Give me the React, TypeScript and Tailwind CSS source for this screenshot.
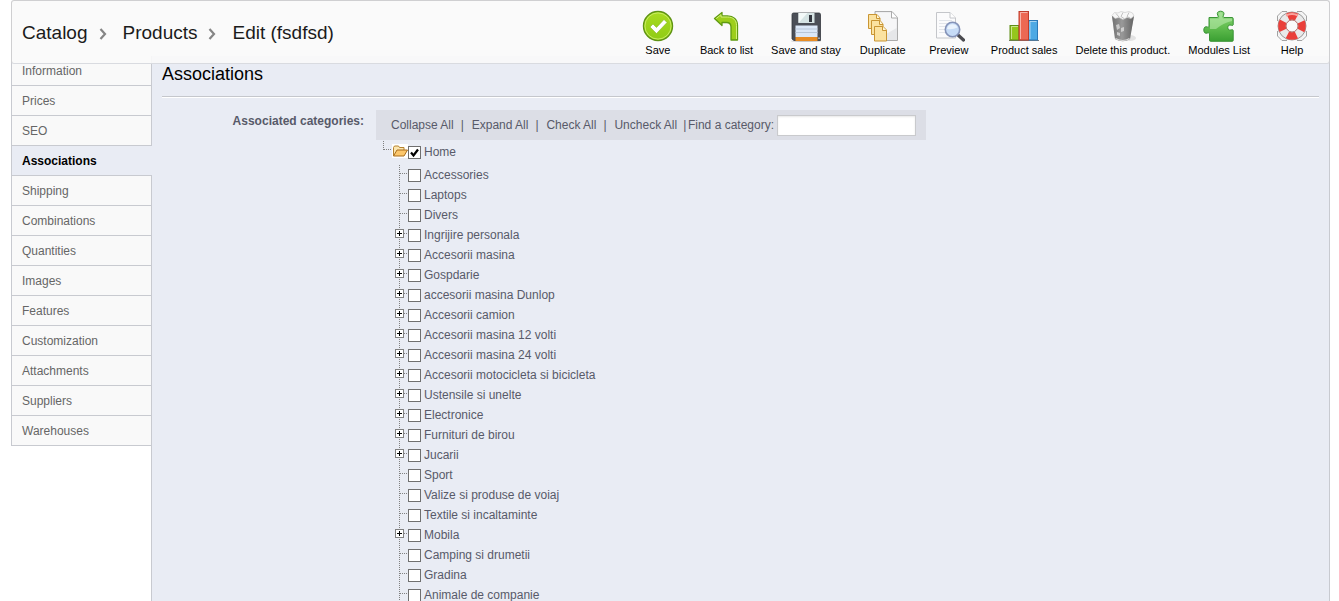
import { Fragment, useState, type ReactNode } from 'react';

interface Category {
  name: string;
  expandable?: boolean;
}

const MENU = [
  'Information',
  'Prices',
  'SEO',
  'Associations',
  'Shipping',
  'Combinations',
  'Quantities',
  'Images',
  'Features',
  'Customization',
  'Attachments',
  'Suppliers',
  'Warehouses',
];

const CATEGORIES: Category[] = [
  { name: 'Accessories' },
  { name: 'Laptops' },
  { name: 'Divers' },
  { name: 'Ingrijire personala', expandable: true },
  { name: 'Accesorii masina', expandable: true },
  { name: 'Gospdarie', expandable: true },
  { name: 'accesorii masina Dunlop', expandable: true },
  { name: 'Accesorii camion', expandable: true },
  { name: 'Accesorii masina 12 volti', expandable: true },
  { name: 'Accesorii masina 24 volti', expandable: true },
  { name: 'Accesorii motocicleta si bicicleta', expandable: true },
  { name: 'Ustensile si unelte', expandable: true },
  { name: 'Electronice', expandable: true },
  { name: 'Furnituri de birou', expandable: true },
  { name: 'Jucarii', expandable: true },
  { name: 'Sport' },
  { name: 'Valize si produse de voiaj' },
  { name: 'Textile si incaltaminte' },
  { name: 'Mobila', expandable: true },
  { name: 'Camping si drumetii' },
  { name: 'Gradina' },
  { name: 'Animale de companie' },
];

function SaveIcon() {
  return (
    <svg width="32" height="32" viewBox="0 0 32 32">
      <defs>
        <linearGradient id="save" x1="0" y1="0" x2="0" y2="1">
          <stop offset="0" stopColor="#a9dc22" />
          <stop offset="1" stopColor="#8fcb14" />
        </linearGradient>
      </defs>
      <circle cx="16" cy="16" r="14.5" fill="url(#save)" stroke="#5f9314" strokeWidth="1.4" />
      <circle cx="16" cy="16" r="13.1" fill="none" stroke="#c9ec63" strokeWidth="1" />
      <path d="M8 17l3-3 3.500 3.500 7.500-8 3 3-10.500 11z" fill="#fff" stroke="#7fae18" strokeWidth=".5" />
    </svg>
  );
}

function BackIcon() {
  return (
    <svg width="32" height="32" viewBox="0 0 32 32">
      <path
        d="M4.500 8.500L12 2.500v3.500h5.500c6 0 10 3.500 10 9.500v14.500h-6.500V17c0-3-1.500-4.500-4.500-4.500H12v3z"
        fill="#9dce1c"
        stroke="#5f9a12"
        strokeWidth="1.300"
        strokeLinejoin="round"
      />
      <path d="M6.200 8.500L11 4.700V7h6.500c5.500 0 9 3 9 8.500V29" fill="none" stroke="#d3f07a" strokeWidth="1" />
    </svg>
  );
}

function FloppyIcon() {
  return (
    <svg width="32" height="32" viewBox="0 0 32 32">
      <ellipse cx="16" cy="31" rx="15" ry="1" fill="#c9c9c9" />
      <path d="M2 4.500q0-1.500 1.500-1.500H29q1.500 0 1.500 1.500V30.500H4L2 29z" fill="#4b4f57" stroke="#34373d" strokeWidth=".8" />
      <rect x="8.500" y="3" width="16" height="10" fill="#d5e3e3" />
      <path d="M8.500 13V3h9z" fill="#f3f9f8" />
      <rect x="19" y="5" width="3" height="7" fill="#33373f" />
      <rect x="5.500" y="15.500" width="22" height="11.500" fill="#dbe8f8" />
      <path d="M5.500 19h22M5.500 22.500h22" stroke="#b8c6d8" />
      <rect x="5.500" y="27" width="22" height="4" fill="#e88d25" />
      <rect x="28.500" y="27.500" width="1" height="1.500" fill="#fff" />
    </svg>
  );
}

function DuplicateIcon() {
  return (
    <svg width="32" height="32" viewBox="0 0 32 32">
      <path d="M8 1.500h17l5.500 6V30.500H8z" fill="#e6e7e9" stroke="#ababab" />
      <path d="M9 2.500h15v5.500h5.500V18L9 30z" fill="#f6f6f7" />
      <path d="M24.500 2v6h6" fill="#fff" stroke="#ababab" />
      <g fill="#fbe2a0" stroke="#c99533">
        <path d="M1.500 4.500h8.500l3 3.500v10.500H1.500z" />
        <path d="M9.500 4.500v4H13" fill="#fff6d8" />
        <path d="M4.500 10.500H13l3 3.500v10.500H4.500z" />
        <path d="M12.500 10.500v4H16" fill="#fff6d8" />
        <path d="M7.500 16.500H16l3.500 3.500v11H7.500z" />
        <path d="M15.500 16.500v4h4" fill="#fff6d8" />
      </g>
    </svg>
  );
}

function PreviewIcon() {
  return (
    <svg width="32" height="32" viewBox="0 0 32 32">
      <path d="M3.500 2.500H17l5.500 5.500v20H3.500z" fill="#fbfbfc" stroke="#c4c6ca" />
      <path d="M17 2.500V8h5.500" fill="#fff" stroke="#c4c6ca" />
      <path d="M6 10.500h13M6 13.500h8M6 16.500h6M6 19.500h6M6 22.500h7" stroke="#e2e5ea" />
      <path d="M25 25l5.500 5" stroke="#4b4b4f" strokeWidth="3.200" strokeLinecap="round" />
      <circle cx="19.500" cy="19.500" r="7.200" fill="#c6dbf6" stroke="#8593b8" strokeWidth="1.600" />
      <path d="M14 19a5.500 5.500 0 0 1 10.500-1.500q-5 2.500-10.500 1.500z" fill="#eaf3fd" />
    </svg>
  );
}

function SalesIcon() {
  return (
    <svg width="32" height="32" viewBox="0 0 32 32">
      <path d="M1 30.500h30" stroke="#777" />
      <rect x="2" y="15.500" width="9" height="14.500" fill="#95c71c" stroke="#5f8d17" />
      <rect x="20.500" y="10.500" width="9" height="19.500" fill="#4da9e4" stroke="#2a78b8" />
      <rect x="11" y="1.500" width="9.500" height="28.500" fill="#ec6853" stroke="#bf3c2b" />
      <path d="M3.500 29V16.500h6.500M12.500 29V2.500h7M22 29V11.500h6.500" fill="none" stroke="#fff" strokeOpacity=".5" />
    </svg>
  );
}

function TrashIcon() {
  return (
    <svg width="32" height="32" viewBox="0 0 32 32">
      <defs>
        <linearGradient id="bin" x1="0" x2="1">
          <stop offset="0" stopColor="#858585" />
          <stop offset=".45" stopColor="#c2c2c2" />
          <stop offset="1" stopColor="#707070" />
        </linearGradient>
        <pattern id="mesh" width="2" height="2" patternUnits="userSpaceOnUse">
          <path d="M0 0l2 2M2 0L0 2" stroke="#4c4c4c" strokeWidth=".35" />
        </pattern>
      </defs>
      <ellipse cx="23" cy="28" rx="6" ry="3" fill="#e2e2e2" />
      <path d="M5 6l3 23q8 4.500 15 0L27 6z" fill="url(#bin)" />
      <path d="M5 6l3 23q8 4.500 15 0L27 6z" fill="url(#mesh)" />
      <path d="M8.500 28.500q7.500 4 14 0" fill="none" stroke="#d9d9d9" strokeWidth="1.200" />
      <path d="M9 15l3-1 1 4-3 2zM14 18l3-1v4l-3 1zM10 22l3 1v3l-3-1z" fill="#e6e6e6" fillOpacity=".7" />
      <path d="M5 5.500l2.500-3L11 3l3-1.500L18 2.500l4-1L25.500 3 27 6l-3 2.500-4-1-4 2-4-2-4 1z" fill="#f7f7f7" stroke="#c6c6c6" strokeWidth=".6" />
      <path d="M9 3.500l3 3.500M16 2.500l-2 4 3 2M22 2.500l-2 4 3 1.500" fill="none" stroke="#a9a9a9" strokeWidth=".7" />
    </svg>
  );
}

function PuzzleIcon() {
  return (
    <svg width="32" height="32" viewBox="0 0 32 32">
      <defs>
        <linearGradient id="puzzle" x1="0" y1="0" x2="0" y2="1">
          <stop offset="0" stopColor="#8ad77a" />
          <stop offset=".5" stopColor="#64bf51" />
          <stop offset="1" stopColor="#3a9f32" />
        </linearGradient>
      </defs>
      <path
        d="M6 7.500h8.500q1.200-.6.300-2Q13 1.500 17.500 1.200q4.800.2 3 4.300-.8 1.400.5 2h8q1.200 0 1.200 1.300v6q-.4 1.200-1.700.500-3.500-1.300-3.700 2.300.2 3.500 3.700 2.200 1.600-.5 1.700.8v10q0 .7-1 .7H7.500q-1 0-1-1v-6.500q-.5-1.600-2-.8Q1 24.200.8 20q.2-4.200 3.700-3 1.500.7 1.500-.800z"
        fill="url(#puzzle)"
        stroke="#3b9437"
      />
      <path d="M7 8.500h9q1-2.500-.5-4.500.5-2 2-1.800 3 .3 2 3-.8 2.500.5 3.300h9V11Q20 13 13 19H7z" fill="#c0ecb2" fillOpacity=".55" />
    </svg>
  );
}

function HelpIcon() {
  return (
    <svg width="32" height="32" viewBox="0 0 32 32">
      <path d="M1.500 8l6-6.500h17l6 6.500v16l-6 6.500h-17L1.500 24z" fill="#f3f3f3" />
      <path d="M1.500 11V6L6 1.500h5M21 1.500h5L30.500 6v5M30.500 21v5L26 30.500h-5M11 30.500H6L1.500 26v-5" fill="none" stroke="#a2a2a2" />
      <circle cx="16" cy="16" r="14" fill="#e9e9e9" stroke="#9a9a9a" />
      {/* four red bands out of a ring whose circumference is 62.8 */}
      <circle cx="16" cy="16" r="10" fill="none" stroke="#ea3f3a" strokeWidth="7.600" strokeDasharray="9.250 6.458" strokeDashoffset="4.625" />
      <path d="M10 5.500q6-3 12 0" fill="none" stroke="#f9a39d" strokeWidth="2" />
      <circle cx="16" cy="16" r="6" fill="#fafafa" stroke="#b06a66" />
    </svg>
  );
}

const TOOLS: { label: string; icon: ReactNode }[] = [
  { label: 'Save', icon: <SaveIcon /> },
  { label: 'Back to list', icon: <BackIcon /> },
  { label: 'Save and stay', icon: <FloppyIcon /> },
  { label: 'Duplicate', icon: <DuplicateIcon /> },
  { label: 'Preview', icon: <PreviewIcon /> },
  { label: 'Product sales', icon: <SalesIcon /> },
  { label: 'Delete this product.', icon: <TrashIcon /> },
  { label: 'Modules List', icon: <PuzzleIcon /> },
  { label: 'Help', icon: <HelpIcon /> },
];

function Chevron() {
  return (
    <svg width="8" height="12" viewBox="0 0 8 12" className="ml-[11px] mr-4 mt-0.5">
      <path d="M1.500 1l4.500 5-4.500 5" fill="none" stroke="#858585" strokeWidth="2.200" />
    </svg>
  );
}

function FolderIcon() {
  return (
    <svg width="16" height="14" viewBox="0 0 16 14" className="bg-white">
      <path d="M1.500 12V3.500l1-1.500h4l1 1.500h4.500V6" fill="#fbe6b0" stroke="#b5822f" />
      <path d="M1.500 12L5 6h10.500L12 12z" fill="#fcc76c" stroke="#a96d1c" strokeLinejoin="round" />
    </svg>
  );
}

function TreeLines({ expandable }: { expandable?: boolean }) {
  return (
    <svg width="18" height="20" viewBox="0 0 18 20" shapeRendering="crispEdges">
      <path d="M9.500 0v20" stroke="#808080" strokeDasharray="1 1" />
      <path d="M10 8.500h8" stroke="#808080" strokeDasharray="1 1" />
      {expandable && (
        <>
          <rect x="5.500" y="4.500" width="8" height="8" fill="#fff" stroke="#808080" />
          <path d="M7 8.500h5M9.500 6v5" stroke="#000" />
        </>
      )}
    </svg>
  );
}

interface CheckProps {
  label: string;
  checked: boolean;
  onChange: () => void;
}

function Check({ label, checked, onChange }: CheckProps) {
  return (
    <label className="flex items-center gap-[3px]">
      <span className="relative mt-px flex">
        <input
          type="checkbox"
          checked={checked}
          onChange={onChange}
          className="h-[13px] w-[13px] appearance-none border border-[#6f6f6f] bg-white"
        />
        {checked && (
          <svg width="13" height="13" viewBox="0 0 13 13" className="pointer-events-none absolute inset-0">
            <path d="M3 6.500l2.500 3L10 3.500" fill="none" stroke="#000" strokeWidth="2.200" />
          </svg>
        )}
      </span>
      {label}
    </label>
  );
}

export default function App() {
  const [checked, setChecked] = useState<string[]>(['Home']);
  const [search, setSearch] = useState('');

  const toggle = (name: string) => {
    setChecked((prev) => (prev.includes(name) ? prev.filter((n) => n !== name) : [...prev, name]));
  };

  const actions = [
    { label: 'Collapse All', run: () => {} },
    { label: 'Expand All', run: () => {} },
    { label: 'Check All', run: () => setChecked(['Home', ...CATEGORIES.map((c) => c.name)]) },
    { label: 'Uncheck All', run: () => setChecked([]) },
  ];

  return (
    <div className="flex h-screen flex-col overflow-hidden bg-white pl-[11px] pr-[9px] font-['Liberation_Sans',Arial,sans-serif] text-xs text-[#585a69]">
      <header className="relative z-10 flex h-16 shrink-0 items-start justify-between rounded-[3px] border border-[#cfcfd1] border-b-[#d9dbe0] bg-[#f9f9f9]/90 pl-2.5 pr-[13px]">
        <nav aria-label="Breadcrumb" className="flex h-16 items-center text-[19px] text-[#1b1b1b]">
          <a href="#catalog">Catalog</a>
          <Chevron />
          <a href="#products">Products</a>
          <Chevron />
          <span>Edit (fsdfsd)</span>
        </nav>
        <ul className="flex gap-[18px] pt-[9px]">
          {TOOLS.map((tool) => (
            <li key={tool.label} className="min-w-12">
              <button className="flex w-full flex-col items-center whitespace-nowrap text-[11px] leading-4 text-black">
                {tool.icon}
                {tool.label}
              </button>
            </li>
          ))}
        </ul>
      </header>

      <div className="-mt-2 flex flex-1">
        <nav aria-label="Product" className="relative -mr-px w-[141px] shrink-0">
          <ul>
            {MENU.map((item) => (
              <li key={item}>
                <a
                  href={`#${item.toLowerCase()}`}
                  className={
                    item === 'Associations'
                      ? 'block h-[30px] border-b border-l border-[#c8cad0] bg-[#e9ecf4] pl-2.5 pt-px font-bold leading-[29px] text-black'
                      : 'block h-[30px] border-x border-b border-[#c8cad0] bg-[#f9f9f9] pl-2.5 pt-px leading-[29px] text-[#666]'
                  }
                >
                  {item}
                </a>
              </li>
            ))}
          </ul>
        </nav>

        <main className="flex-1 border-x border-[#c8cad0] bg-[#e9ecf4] px-2.5 pt-2">
          <h1 className="text-lg leading-5 text-black">Associations</h1>
          <hr className="mt-3 h-0.5 border-b border-t border-b-white border-t-[#c5c7cc]" />

          <div className="mt-3 flex gap-3">
            <h2 className="w-[202px] pt-[3px] text-right font-bold leading-4">Associated categories:</h2>
            <div className="w-[550px]">
              <div className="flex h-[30px] items-center whitespace-nowrap bg-[#dcdee6] pl-[15px] pr-2.5">
                {actions.map((action, i) => (
                  <Fragment key={action.label}>
                    <button onClick={action.run}>{action.label}</button>
                    <span className={i < actions.length - 1 ? 'w-[18px] pl-[7px]' : 'pl-1.5'}>|</span>
                  </Fragment>
                ))}
                <label className="ml-auto flex items-center gap-[3px]">
                  Find a category:
                  <input
                    type="text"
                    value={search}
                    onChange={(e) => setSearch(e.target.value)}
                    className="h-[21px] w-[139px] border border-[#c9cacd] bg-white px-1 shadow-[inset_0_1px_2px_#e8e8e8] outline-none"
                  />
                </label>
              </div>

              <div className="flex h-[25px] items-start pl-[7px]">
                <svg width="9" height="12" viewBox="0 0 9 12" shapeRendering="crispEdges">
                  <path d="M.5 1v9M1 9.500h8" fill="none" stroke="#808080" strokeDasharray="1 1" />
                </svg>
                <span className="pt-1">
                  <FolderIcon />
                </span>
                <span className="pt-1">
                  <Check label="Home" checked={checked.includes('Home')} onChange={() => toggle('Home')} />
                </span>
              </div>
              <ul className="pl-3.5">
                {CATEGORIES.map((category) => (
                  <li key={category.name} className="flex h-5 items-center">
                    {category.expandable ? (
                      <button aria-label={`Expand ${category.name}`}>
                        <TreeLines expandable />
                      </button>
                    ) : (
                      <TreeLines />
                    )}
                    <Check
                      label={category.name}
                      checked={checked.includes(category.name)}
                      onChange={() => toggle(category.name)}
                    />
                  </li>
                ))}
              </ul>
            </div>
          </div>
        </main>
      </div>
    </div>
  );
}
